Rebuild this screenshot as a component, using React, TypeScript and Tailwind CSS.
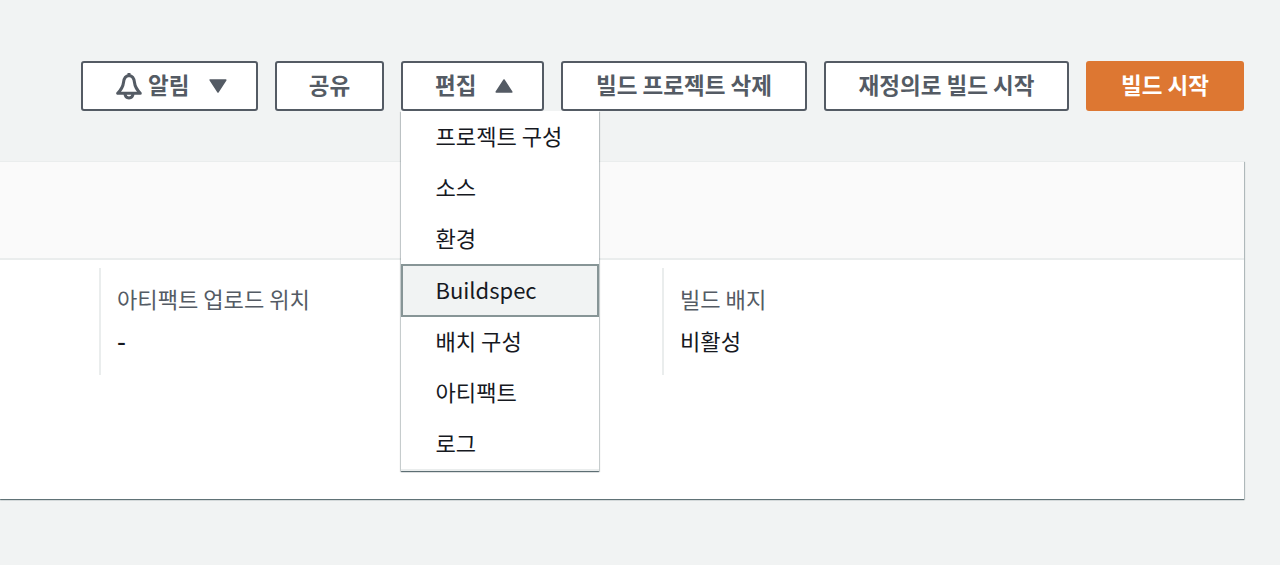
import type { ReactNode } from "react";

const BUTTON =
  "flex h-[50px] shrink-0 items-center rounded-[3px] border-2 border-[#545b64] bg-white text-[22.5px] font-bold leading-none text-[#545b64]";

function Label({ children }: { children: ReactNode }) {
  return <span className="whitespace-nowrap pb-[3px]">{children}</span>;
}

function BellIcon() {
  return (
    <svg width="26" height="28" viewBox="0 0 26 28" fill="none" stroke="#545b64" strokeWidth="3" strokeLinejoin="round">
      <path d="M13 3.600C9.600 3.800 7.900 6.800 7.500 10.500C7.100 14.500 5.500 17.300 1.700 21.300H24.300C20.500 17.300 18.900 14.500 18.500 10.500C18.100 6.800 16.400 3.800 13 3.600Z" />
      <path d="M13 3.500V1" />
      <path d="M9 22C9.300 27.200 16.700 27.200 17 22" />
    </svg>
  );
}

function Caret({ up = false }: { up?: boolean }) {
  return (
    <svg width="18" height="14" viewBox="0 0 18 14" fill="#545b64" stroke="#545b64" strokeWidth="1.500" strokeLinejoin="round">
      <path d={up ? "M1.200 13L9 1L16.800 13Z" : "M1.200 1H16.800L9 13Z"} />
    </svg>
  );
}

const menuItems = ["프로젝트 구성", "소스", "환경", "Buildspec", "배치 구성", "아티팩트", "로그"];

function EditMenu() {
  return (
    <ul className="absolute top-[50px] left-0 z-10 w-[198px] border-b-2 border-[#eaeded] bg-white text-[22px] leading-none text-[#16191f] shadow-[0_1px_1px_0_rgba(0,28,36,0.5),1px_1px_1px_0_rgba(0,28,36,0.15),-1px_1px_1px_0_rgba(0,28,36,0.15)]">
      {menuItems.map((item, index) => (
        <li
          key={item}
          className={
            item === "Buildspec"
              ? "flex h-[53px] items-center border-2 border-[#879596] bg-[#f1f3f3] pb-[3px] pl-[32.5px]"
              : index < 3
                ? "flex h-[51px] items-center pb-[2px] pl-[34.5px] text-[22.1px]"
                : "flex h-[51px] items-center pb-[4px] pl-[34.5px] text-[22.1px] last:h-[50px] last:pb-[3px]"
          }
        >
          {item}
        </li>
      ))}
    </ul>
  );
}

function Field({ label, value, className }: { label: string; value: string; className: string }) {
  return (
    <div className={"h-[107px] border-l-2 border-[#eaeded] pl-4 pt-[14px] text-[22.1px] " + className}>
      <div className="h-[42px] leading-8 text-[#545b64]">{label}</div>
      <div className={value === "-" ? "text-[25px] font-medium leading-8 text-[#16191f]" : "leading-8 text-[#16191f]"}>{value}</div>
    </div>
  );
}

export default function App() {
  return (
    <div className="h-[565px] w-[1280px] overflow-hidden bg-[#f1f3f3] pt-[61px] font-['Noto_Sans_CJK_KR',sans-serif]">
      <header className="flex h-[50px] justify-end gap-[17px] pr-9">
        <button className={BUTTON + " w-[177px] pl-[33px]"}>
          <BellIcon />
          <span className="ml-[6px] mr-[20px] pb-[3px]">알림</span>
          <Caret />
        </button>
        <button className={BUTTON + " w-[109px] justify-center"}><Label>공유</Label></button>
        <div className="relative">
          <button className={BUTTON + " w-[143px] gap-[19px] pl-[32px]"}>
            <Label>편집</Label>
            <Caret up />
          </button>
          <EditMenu />
        </div>
        <button className={BUTTON + " w-[246px] justify-center"}><Label>빌드 프로젝트 삭제</Label></button>
        <button className={BUTTON + " w-[245px] justify-center"}><Label>재정의로 빌드 시작</Label></button>
        <button className="flex h-[50px] w-[158px] shrink-0 items-center justify-center rounded-[3px] bg-[#dd7732] text-[22.5px] font-bold leading-none text-white"><Label>빌드 시작</Label></button>
      </header>
      <main className="mt-[50px] h-[338px] w-[1244px] border-t border-[#eaeded] bg-white shadow-[0_1px_1px_0_rgba(0,28,36,0.5),1px_1px_1px_0_rgba(0,28,36,0.2)]">
        <div className="h-[98px] border-b-2 border-[#eaeded] bg-[#fafafa]" />
        <div className="flex pl-[99px] pt-2">
          <Field label="아티팩트 업로드 위치" value="-" className="w-[563px]" />
          <Field label="빌드 배지" value="비활성" className="w-[563px]" />
        </div>
      </main>
    </div>
  );
}
